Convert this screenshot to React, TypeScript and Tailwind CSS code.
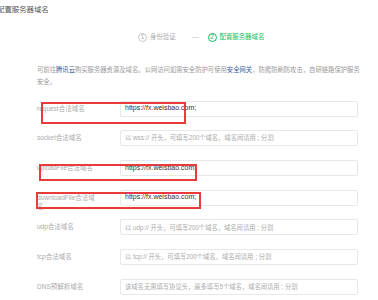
const rows = [
  { label: "request合法域名", value: "https://fx.weisbao.com;" },
  { label: "socket合法域名", placeholder: "以 wss:// 开头，可填写200个域名，域名间请用 ; 分割" },
  { label: "uploadFile合法域名", value: "https://fx.weisbao.com;" },
  { label: "downloadFile合法域名", value: "https://fx.weisbao.com;" },
  { label: "udp合法域名", placeholder: "以 udp:// 开头，可填写200个域名，域名间请用 ; 分割" },
  { label: "tcp合法域名", placeholder: "以 tcp:// 开头，可填写200个域名，域名间请用 ; 分割" },
  { label: "DNS预解析域名", placeholder: "该域名无需填写协议头，最多填写5个域名，域名间请用 ; 分割" },
];

export default function App() {
  return (
    <div
      className="relative w-[378px] h-[300px] overflow-hidden bg-white"
      style={{ fontFamily: '"Liberation Sans", "Noto Sans CJK SC", sans-serif' }}
    >
      {/* page title */}
      <div className="pt-[4px] -ml-[3px] text-[7.4px] leading-[12px] text-[#555]">配置服务器域名</div>

      {/* steps */}
      <div className="mt-[16px] h-[10px] pl-[138px] flex items-center text-[6.4px]">
        <span className="w-[9px] h-[9px] rounded-full border border-[#c8c8c8] text-[#aaa] flex items-center justify-center leading-none">1</span>
        <span className="ml-[3px] text-[#aaa]">身份验证</span>
        <span className="ml-[16px] w-[7px] h-px bg-[#ddd]"></span>
        <span className="ml-[9px] w-[9px] h-[9px] rounded-full border border-[#07c160] text-[#07c160] flex items-center justify-center leading-none">2</span>
        <span className="ml-[3px] text-[#07c160]">配置服务器域名</span>
      </div>

      {/* description */}
      <p className="mt-[21.5px] pl-[37px] pr-[16px] text-[6.33px] leading-[12px] text-[#999]">
        可前往<span className="text-[#3b5b98]">腾讯云</span>购买服务器资源及域名。公网访问如需安全防护可使用<span className="text-[#3b5b98]">安全网关</span>，防爬防刷防攻击，自研链路保护服务安全。
      </p>

      {/* domain rows */}
      <div className="mt-[13px] pl-[37px] flex flex-col gap-[13.7px]">
        {rows.map((r) => (
          <div key={r.label} className="flex items-start h-[16px]">
            <div className="w-[64px] pt-[3px] text-[6.5px] leading-[9.5px] text-[#aaa] break-all">{r.label}</div>
            <div className="ml-[19px] w-[238px] h-[16px] shrink-0 border border-[#e8e8e8] rounded-[2px] px-[4px] flex items-center">
              {r.value ? (
                <span className="text-[7px] text-[#333]">{r.value}</span>
              ) : (
                <span className="text-[6.3px] text-[#aaa]">{r.placeholder}</span>
              )}
            </div>
          </div>
        ))}
      </div>

      {/* red annotation boxes */}
      <div className="absolute left-[41px] top-[102px] w-[145px] h-[22px] border-2 border-[#ea3b3b]"></div>
      <div className="absolute left-[39px] top-[164px] w-[158px] h-[17px] border-2 border-[#ea3b3b]"></div>
      <div className="absolute left-[36px] top-[192px] w-[165px] h-[17px] border-2 border-[#ea3b3b]"></div>
    </div>
  );
}
